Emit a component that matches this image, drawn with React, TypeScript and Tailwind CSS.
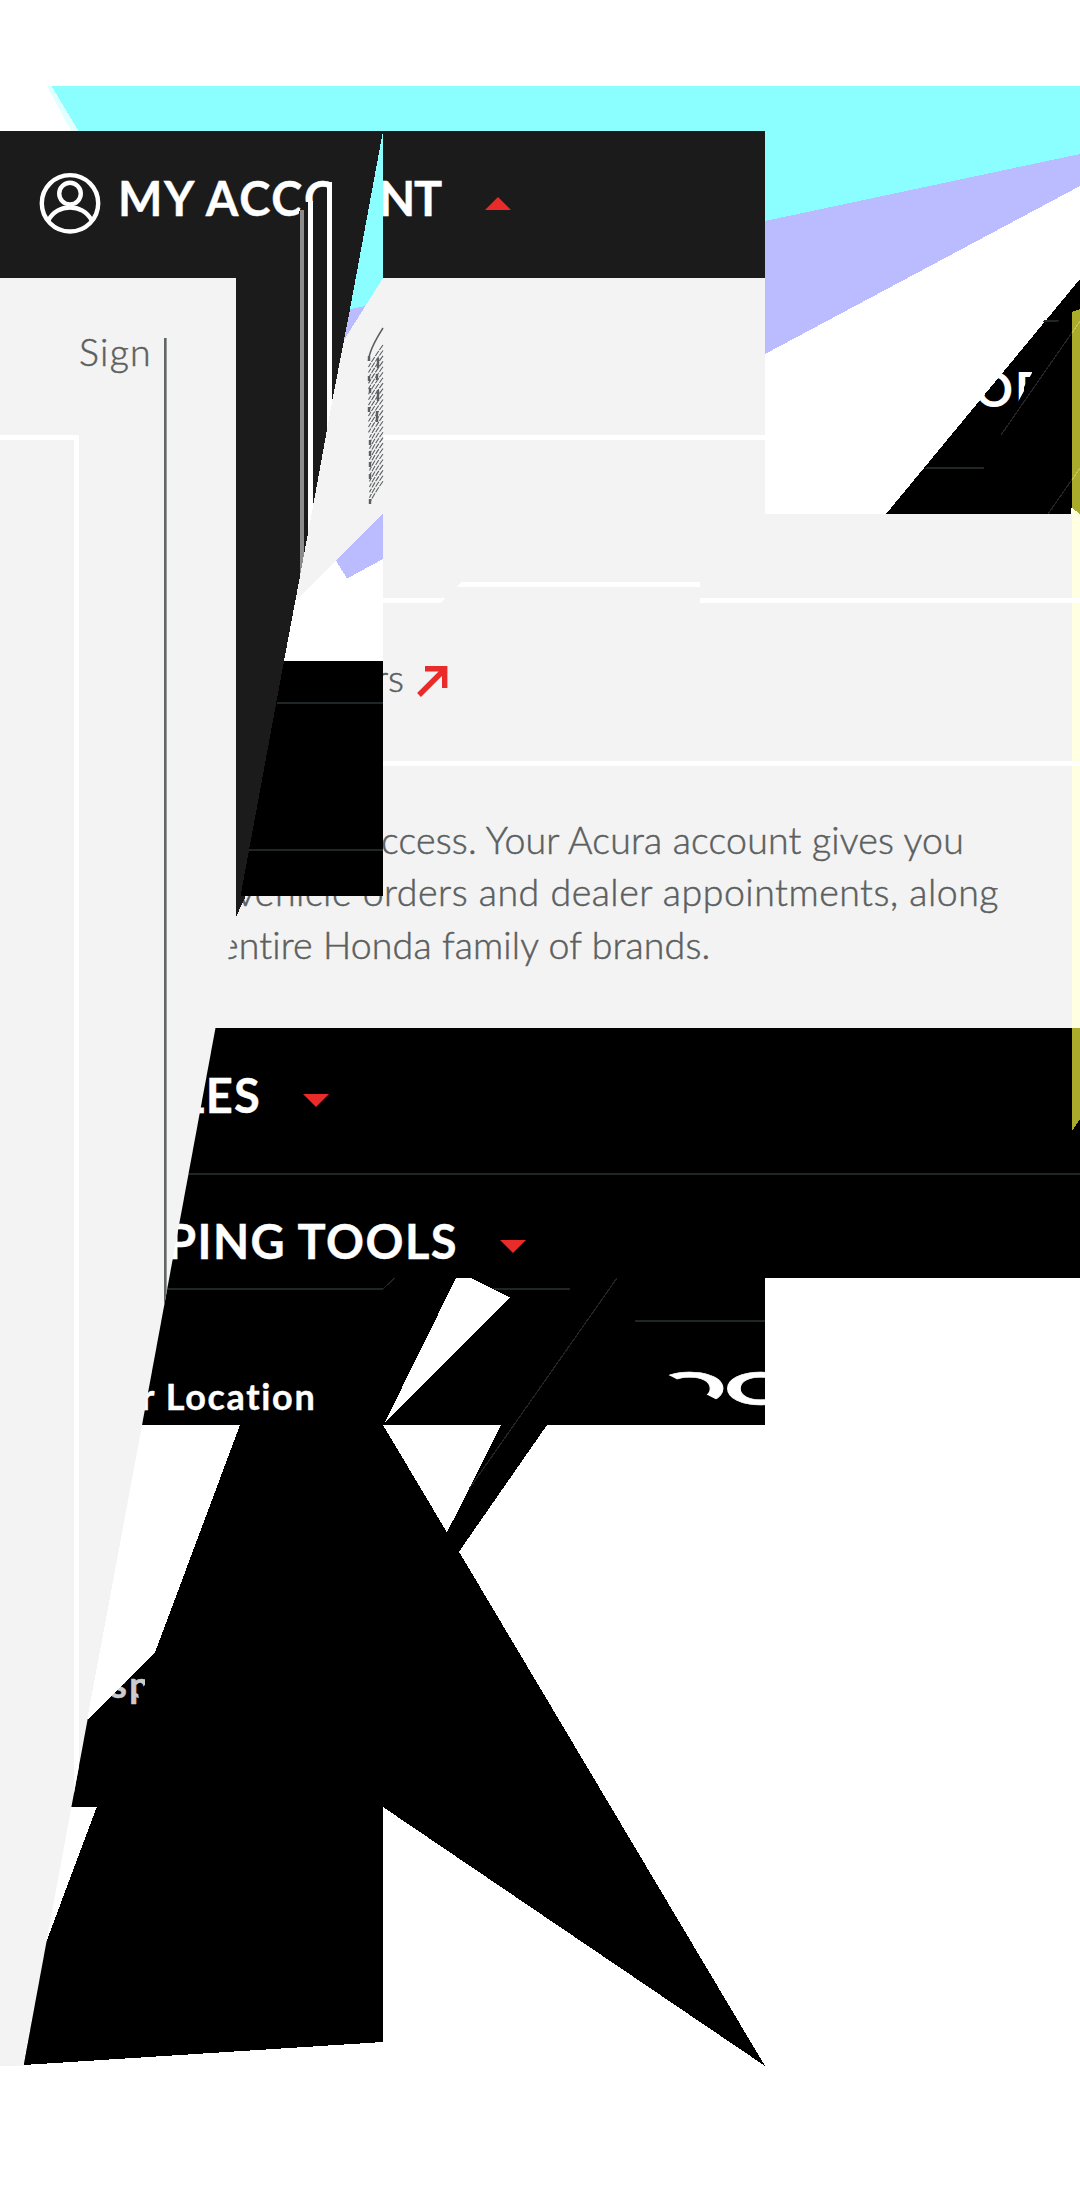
import { useLayoutEffect, useRef, useState } from "react";

/** Text whose tracking is adjusted so that it spans a given width. */
function Fit({ children, width, className = "" }: { children: string; width: number; className?: string }) {
  const ref = useRef<HTMLSpanElement>(null);
  const [spacing, setSpacing] = useState(0);
  useLayoutEffect(() => {
    if (!ref.current) return;
    const natural = ref.current.getBoundingClientRect().width;
    setSpacing((width - natural) / children.length);
  }, []);
  return (
    <span ref={ref} className={"inline-block self-start whitespace-pre " + className} style={{ letterSpacing: spacing }}>
      {children}
    </span>
  );
}

function Caret({ up = false, className = "" }: { up?: boolean; className?: string }) {
  return (
    <svg width="26" height="13" viewBox="0 0 26 13" className={"shrink-0 " + className}>
      <path d={up ? "M0 13L13 0L26 13Z" : "M0 0H26L13 13Z"} fill="#e92c2a" />
    </svg>
  );
}

function UserIcon() {
  return (
    <svg width="62" height="62" viewBox="0 0 62 62" fill="none" stroke="white" strokeWidth="4.4" className="mt-[41px] shrink-0">
      <circle cx="31" cy="31.3" r="28.2" />
      <circle cx="31" cy="21.6" r="10.8" />
      <path d="M9.5 48.3C18 31.2 44 31.2 52.5 48.3" />
    </svg>
  );
}

function Backdrop() {
  return (
    <svg width="1080" height="2211" className="absolute left-0 top-0" shapeRendering="crispEdges">
      <path d="M47 86H60L90 131H71Z" fill="#e0ffff" />
      <path d="M51.5 86H1080V154L765 221L400 300V131H78.5Z" fill="#8bffff" />
      <path d="M765 221L1080 154V186L765 354Z" fill="#bbbbff" />
      <path d="M1080 279V514H886Z" fill="#000" />
      <path d="M1044 320H1059L1058 322H1043ZM926 467H984V469H924Z" fill="#202528" />
      <path d="M1001 435L1080 321M1048 514L1080 468" stroke="#242424" strokeWidth="1.2" />
      <path d="M130 1278H765V1425H547L459 1551.7L765 2066L383 1807V2042L23.5 2065L45.5 1944L96.7 1807H71L87 1720L155 1652.5L240 1425H110Z" fill="#000" />
      <path d="M456 1278H471L510 1297.5L384 1424ZM383 1425H501L447 1532.5Z" fill="#fff" />
      <path d="M160 1288H383V1290H160ZM492 1288H570V1290H496ZM635 1320H765V1322H635Z" fill="#202528" />
      <path d="M383 1289L394.5 1278M617 1278L469 1489" stroke="#242424" strokeWidth="1.2" />
    </svg>
  );
}

const hatch = Array.from({ length: 26 }, (_, i) => 352 + i * 5.45);

function Shards() {
  return (
    <svg width="1080" height="2211" className="absolute left-0 top-0" shapeRendering="crispEdges">
      {/* stretched letter stems */}
      <path d="M305 202H332V560H299V212Z" fill="#1b1b1b" />
      <path d="M236 278H383V600L236 917Z" fill="#1b1b1b" />
      <path d="M300 210H304V590H300Z" fill="#8c8c8c" />
      <path d="M308 201H313V560H308ZM327 182H332V460H327Z" fill="#fff" />
      {/* fragments right of the diagonal */}
      <path d="M383 131V278L366 306L350 309Z" fill="#8bffff" />
      <path d="M350 309L366 306L344 340Z" fill="#bbbbff" />
      <path d="M383 512V661H284L296 597L302 570Z" fill="#fff" />
      <path d="M383 278V514L299 597.500H296L313.500 503.500L332 402L344 340Z" fill="#f3f3f3" />
      <path d="M383 514V559L347 578.5L336 560.7Z" fill="#bbbbff" />
      <path d="M284 661H383V896H240.5Z" fill="#000" />
      <path d="M277 702H383V704H276.5ZM249.5 849H383V851H249Z" fill="#202528" />
      {/* sheared lettering */}
      <g fill="none" stroke="#5c5f60" strokeWidth="1.1" shapeRendering="auto">
        <path d="M383 328Q369 350 368.500 361" strokeWidth="1.5" />
        {hatch.map((y, i) => (
          <path key={y} strokeDasharray="6 1.2" d={`M383 ${y - 7}Q375 ${y + 4} ${i < 13 ? 368.5 : 369.5} ${y + 15}`} />
        ))}
        <path d="M369 356V361M369 376V381M370 388V393M369 407V412M378 358V368M377 374V380M378 390V401M377 411V422M370 440V445M370 451V456M370 462V467M370 474V479M370 499V504" strokeWidth="2.4" />
      </g>
      {/* right edge highlight */}
      <path d="M1071 508H1075V514H1071Z" fill="#fff" />
      <path d="M1072 312L1080 309V514L1072 508ZM1072 1028H1080V1119L1072 1131Z" fill="#abab2b" />
      <path d="M1072 508L1080 514V1028H1072Z" fill="#ffffe2" />
      <path d="M1072 598H1080V603H1072ZM1072 761H1080V766H1072Z" fill="#fff" />
      <path d="M1072 333L1080 321M1072 480L1080 468" stroke="#c4c45a" />
    </svg>
  );
}

function Header() {
  return (
    <header className="flex h-[147px] w-[765px] items-start bg-[#1b1b1b] pl-[39px] text-[47px] font-bold leading-[46px] text-white [-webkit-text-stroke:0.4px_white]">
      <UserIcon />
      <h1 className="flex pt-[44px]">
        <Fit width={186} className="ml-[17px]">MY ACC</Fit>
        <span className="h-[46px] w-[26px] overflow-hidden">O</span>
      </h1>
      <div className="ml-[53px] w-[62px] overflow-hidden pt-[44px]">
        <Fit width={62} className="-ml-[4px]">NT</Fit>
      </div>
      <Caret up className="ml-[40px] mt-[66px]" />
    </header>
  );
}

function AccountPanel() {
  return (
    <section className="relative h-[750px]">
      <div className="h-[236px] w-[765px] bg-[#f3f3f3] pt-[157px]">
        <div className="h-[5px] bg-white" />
      </div>
      <div className="h-[514px] bg-[#f3f3f3] pt-[68px]">
        <svg width="1080" height="21" className="block" shapeRendering="crispEdges">
          <path d="M461 0H700V5H456.500ZM300 16H445L440.500 21H300ZM700 16H1080V21H700Z" fill="white" />
        </svg>
        <div className="flex h-[158px] items-start pl-[383px] pt-[56px] text-[37.5px] font-light leading-[37px] text-[#5c5f60] [-webkit-text-stroke:0.5px_#5c5f60]">
          <div className="w-[22px] overflow-hidden"><Fit width={29} className="-ml-[8px]">rs</Fit></div>
          <svg width="31" height="32" viewBox="0 0 31 32" className="ml-[12px] mt-[7px]">
            <path d="M2 29L26 5M8 2.700H27.700V22" fill="none" stroke="#e92c2a" strokeWidth="5.4" />
          </svg>
        </div>
        <div className="h-[5px] bg-white" />
        <p className="flex flex-col pt-[48px] text-[37.5px] font-light leading-[52.400px] text-[#5c5f60] [-webkit-text-stroke:0.5px_#5c5f60]">
          <Fit width={583} className="ml-[381px]">ccess. Your Acura account gives you</Fit>
          <Fit width={763} className="ml-[236px]">vehicle orders and dealer appointments, along</Fit>
          <Fit width={492} className="ml-[219px]">entire Honda family of brands.</Fit>
        </p>
      </div>
    </section>
  );
}

function Navigation() {
  return (
    <nav className="h-[250px] bg-black text-[47px] font-bold leading-[46px] text-white [-webkit-text-stroke:0.4px_white]">
      <div className="flex h-[147px] items-start border-b-2 border-[#202528] pl-[180px] pt-[44px]">
        <Fit width={81}>LES</Fit>
        <Caret className="ml-[42px] mt-[22px]" />
      </div>
      <div className="flex items-start pl-[167px] pt-[43px]">
        <Fit width={291}>PING TOOLS</Fit>
        <Caret className="ml-[42px] mt-[22px]" />
      </div>
    </nav>
  );
}

function SidePanel() {
  return (
    <aside className="absolute left-0 top-[278px] h-[1788px] w-[236px] bg-[#f3f3f3] [clip-path:polygon(0_0,236px_0,236px_639px,23.5px_1788px,0_1788px)]">
      <div className="flex justify-between pl-[79px] pr-[69px] pt-[55px] text-[37.5px] font-light leading-[37px] text-[#5c5f60] [-webkit-text-stroke:0.5px_#5c5f60]">
        <Fit width={73}>Sign</Fit>
        <div className="-mb-[1000px] mt-[5px] h-[1000px] w-[3px] border-r border-[#999b9b] bg-[#636666]" />
      </div>
      <div className="mt-[65px] h-[1700px] w-[79px] border-r-[5px] border-t-[5px] border-white" />
    </aside>
  );
}

export default function App() {
  return (
    <main className="relative h-[2211px] w-[1080px] overflow-hidden bg-white font-['Lato','Open_Sans',sans-serif]">
      <Backdrop />
      <div className="absolute left-[975px] top-[366px] flex text-[47px] font-bold leading-[46px] text-white [clip-path:polygon(21px_0,57px_0,57px_7px,49px_21px,49px_25px,43px_36px,43px_46px,-3px_46px,-3px_33px)]">
        <Fit width={40}>O</Fit>
        <span>R</span>
      </div>
      <div className="relative flex flex-col pt-[131px]">
        <Header />
        <AccountPanel />
        <Navigation />
        <div className="pl-[141px] pt-[100px] text-[36px] font-bold leading-[36px] text-white [-webkit-text-stroke:0.4px_white]">
          <Fit width={176}>r Location</Fit>
        </div>
      </div>
      <div className="absolute left-[653px] top-[1364px] w-[112px] overflow-hidden text-[46.5px] font-bold leading-[46px] text-white [-webkit-text-stroke:0.6px_white]">
        <div className="flex origin-left scale-x-[1.95]">
          <span className="[clip-path:polygon(7px_0,100%_0,100%_100%,38px_41px,7px_10px)]">O</span>
          <span className="-ml-[1px]">O</span>
        </div>
      </div>
      <div className="absolute left-[111px] top-[1667px] text-[36px] font-bold leading-[35px] text-[#ccc] [-webkit-text-stroke:0.6px_#ccc] [clip-path:polygon(17px_10px,34px_10px,34px_18px,27px_24px,28px_34px,24px_40px,0_40px,0_29px)]">
        <Fit width={41}>sp</Fit>
      </div>
      <Shards />
      <SidePanel />
      <svg width="1080" height="2211" className="absolute left-0 top-0" shapeRendering="crispEdges">
        <path d="M240 1425L155 1652.500L87 1720L142.500 1425Z" fill="white" />
      </svg>
    </main>
  );
}
